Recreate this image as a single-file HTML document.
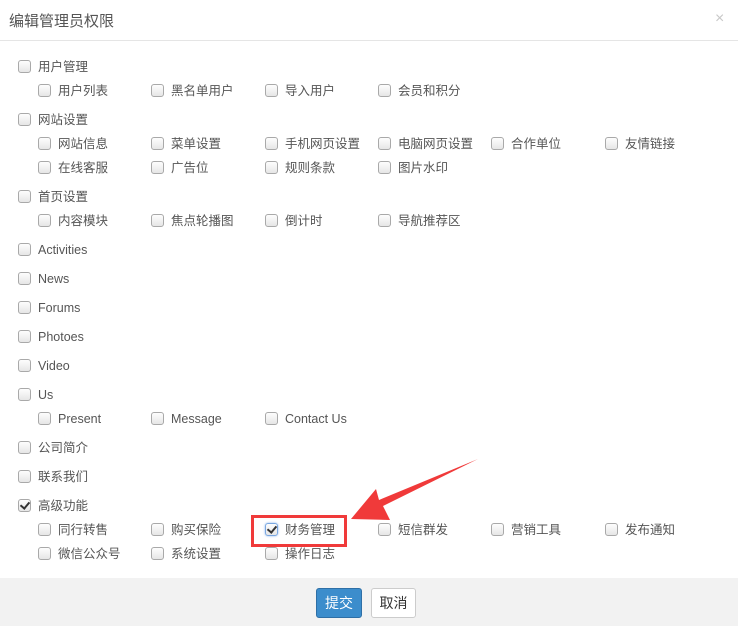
<!DOCTYPE html>
<html><head><meta charset="utf-8"><style>
*{margin:0;padding:0;box-sizing:border-box}
body{width:738px;height:626px;background:#fff;position:relative;overflow:hidden;font-family:"Liberation Sans","Noto Sans CJK SC",sans-serif;font-size:12.5px;color:#555}
.t{position:absolute;left:9px;top:10px;font-size:15px;color:#555}
.x{position:absolute;left:715px;top:10px;font-size:16px;color:#c8c8c8}
.hr{position:absolute;left:0;top:40px;width:738px;height:1px;background:#e5e5e5}
.i{position:absolute;white-space:nowrap;line-height:16px}
.i b{position:absolute;left:0;top:1px;width:13px;height:13px;border:1px solid #a9a9a9;border-radius:3px;background:linear-gradient(#fdfdfd,#e6e6e6)}
.i span{position:absolute;left:20px;top:0}
.ck b::after{content:"";position:absolute;left:3px;top:0px;width:4px;height:7px;border:solid #333;border-width:0 2px 2px 0;transform:rotate(40deg)}
.ck2 b{border-color:#7aa7e0;box-shadow:0 0 2px #8ab4ef}
.f{position:absolute;left:0;top:578px;width:738px;height:48px;background:#f2f2f2}
.btn{position:absolute;top:588px;height:30px;border-radius:3px;font-size:14px;line-height:28px;text-align:center}
</style></head><body>
<div class="t">编辑管理员权限</div><div class="x">×</div><div class="hr"></div>

<div class="i" style="left:18px;top:59px"><b></b><span>用户管理</span></div>
<div class="i" style="left:38px;top:83px"><b></b><span>用户列表</span></div>
<div class="i" style="left:151px;top:83px"><b></b><span>黑名单用户</span></div>
<div class="i" style="left:265px;top:83px"><b></b><span>导入用户</span></div>
<div class="i" style="left:378px;top:83px"><b></b><span>会员和积分</span></div>

<div class="i" style="left:18px;top:112px"><b></b><span>网站设置</span></div>
<div class="i" style="left:38px;top:136px"><b></b><span>网站信息</span></div>
<div class="i" style="left:151px;top:136px"><b></b><span>菜单设置</span></div>
<div class="i" style="left:265px;top:136px"><b></b><span>手机网页设置</span></div>
<div class="i" style="left:378px;top:136px"><b></b><span>电脑网页设置</span></div>
<div class="i" style="left:491px;top:136px"><b></b><span>合作单位</span></div>
<div class="i" style="left:605px;top:136px"><b></b><span>友情链接</span></div>
<div class="i" style="left:38px;top:160px"><b></b><span>在线客服</span></div>
<div class="i" style="left:151px;top:160px"><b></b><span>广告位</span></div>
<div class="i" style="left:265px;top:160px"><b></b><span>规则条款</span></div>
<div class="i" style="left:378px;top:160px"><b></b><span>图片水印</span></div>

<div class="i" style="left:18px;top:189px"><b></b><span>首页设置</span></div>
<div class="i" style="left:38px;top:213px"><b></b><span>内容模块</span></div>
<div class="i" style="left:151px;top:213px"><b></b><span>焦点轮播图</span></div>
<div class="i" style="left:265px;top:213px"><b></b><span>倒计时</span></div>
<div class="i" style="left:378px;top:213px"><b></b><span>导航推荐区</span></div>

<div class="i" style="left:18px;top:242px"><b></b><span>Activities</span></div>
<div class="i" style="left:18px;top:271px"><b></b><span>News</span></div>
<div class="i" style="left:18px;top:300px"><b></b><span>Forums</span></div>
<div class="i" style="left:18px;top:329px"><b></b><span>Photoes</span></div>
<div class="i" style="left:18px;top:358px"><b></b><span>Video</span></div>
<div class="i" style="left:18px;top:387px"><b></b><span>Us</span></div>
<div class="i" style="left:38px;top:411px"><b></b><span>Present</span></div>
<div class="i" style="left:151px;top:411px"><b></b><span>Message</span></div>
<div class="i" style="left:265px;top:411px"><b></b><span>Contact Us</span></div>
<div class="i" style="left:18px;top:440px"><b></b><span>公司简介</span></div>
<div class="i" style="left:18px;top:469px"><b></b><span>联系我们</span></div>

<div class="i ck" style="left:18px;top:498px"><b></b><span>高级功能</span></div>
<div class="i" style="left:38px;top:522px"><b></b><span>同行转售</span></div>
<div class="i" style="left:151px;top:522px"><b></b><span>购买保险</span></div>
<div class="i ck ck2" style="left:265px;top:522px"><b></b><span>财务管理</span></div>
<div class="i" style="left:378px;top:522px"><b></b><span>短信群发</span></div>
<div class="i" style="left:491px;top:522px"><b></b><span>营销工具</span></div>
<div class="i" style="left:605px;top:522px"><b></b><span>发布通知</span></div>
<div class="i" style="left:38px;top:546px"><b></b><span>微信公众号</span></div>
<div class="i" style="left:151px;top:546px"><b></b><span>系统设置</span></div>
<div class="i" style="left:265px;top:546px"><b></b><span>操作日志</span></div>

<div style="position:absolute;left:251px;top:515px;width:96px;height:32px;border:3px solid #f03a3a"></div>
<svg style="position:absolute;left:0;top:0" width="738" height="626"><polygon points="478,459 383,506 390,520 351,519 376,489 379,500" fill="#f03a3a"/></svg>

<div class="f"></div>
<div class="btn" style="left:316px;width:46px;background:#3c8dcc;border:1px solid #2e6fa6;color:#fff">提交</div>
<div class="btn" style="left:371px;width:45px;background:#fff;border:1px solid #ccc;color:#333">取消</div>
</body></html>
